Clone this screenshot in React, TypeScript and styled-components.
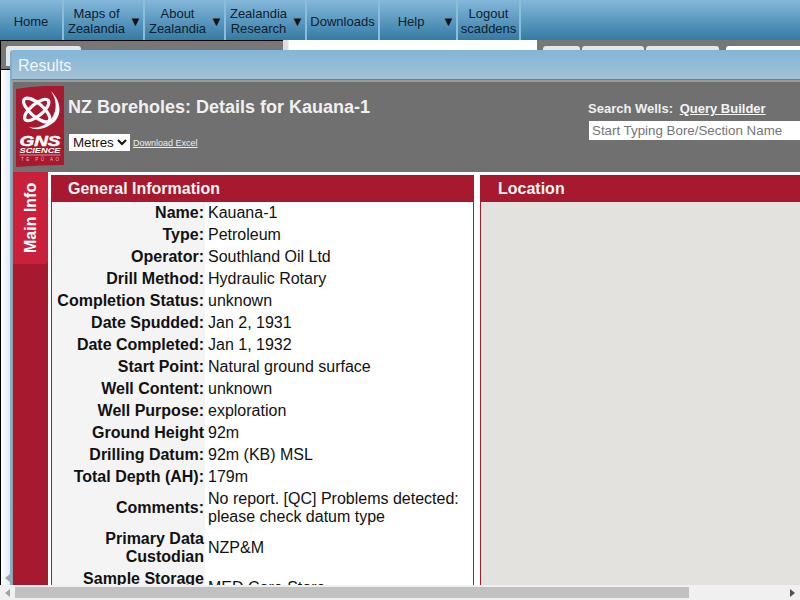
import React from 'react'
import styled, { createGlobalStyle } from 'styled-components'

const GlobalStyle = createGlobalStyle`
    html, body {
        margin: 0;
        padding: 0;
        width: 800px;
        height: 600px;
        overflow: hidden;
        background: #fff;
        font-family: "Liberation Sans", Arial, sans-serif;
    }
`

type NavEntry = { label: string[]; caret?: boolean; width: number }

const navEntries: NavEntry[] = [
    { label: ['Home'], width: 64 },
    { label: ['Maps of', 'Zealandia'], caret: true, width: 81 },
    { label: ['About', 'Zealandia'], caret: true, width: 81 },
    { label: ['Zealandia', 'Research'], caret: true, width: 81 },
    { label: ['Downloads'], width: 73 },
    { label: ['Help'], caret: true, width: 78 },
    { label: ['Logout', 'scaddens'], width: 63 },
]

const details: [string, string[]][] = [
    ['Name:', ['Kauana-1']],
    ['Type:', ['Petroleum']],
    ['Operator:', ['Southland Oil Ltd']],
    ['Drill Method:', ['Hydraulic Rotary']],
    ['Completion Status:', ['unknown']],
    ['Date Spudded:', ['Jan 2, 1931']],
    ['Date Completed:', ['Jan 1, 1932']],
    ['Start Point:', ['Natural ground surface']],
    ['Well Content:', ['unknown']],
    ['Well Purpose:', ['exploration']],
    ['Ground Height', ['92m']],
    ['Drilling Datum:', ['92m (KB) MSL']],
    ['Total Depth (AH):', ['179m']],
    ['Comments:', ['No report. [QC] Problems detected:', 'please check datum type']],
    ['Primary Data Custodian', ['NZP&M']],
    ['Sample Storage Location', ['MED Core Store']],
]

function GnsLogo() {
    return (
        <LogoSvg viewBox='0 0 48 81'>
            <path d='M0 3 Q24 -1 48 0 V79 Q24 79 0 81 Z' fill='#a6192e' />
            <path d='M35 5 C47 17 46 33 34 39 C28 43 20 45 13 41 C21 43 28 40 33 35 C41 28 42 16 35 5 Z' fill='#fff' />
            <g fill='none' stroke='#fff' strokeWidth='3.2'>
                <ellipse cx='20.7' cy='24' rx='16.5' ry='6.5' transform='rotate(41 20.7 24)' />
                <ellipse cx='20.7' cy='24' rx='15' ry='6' transform='rotate(-40 20.7 24)' />
            </g>
            <LogoWord x='24' y='59.5' fontSize='15' stroke='#fff' strokeWidth='0.5' textLength='41' lengthAdjust='spacingAndGlyphs'>GNS</LogoWord>
            <LogoWord x='24' y='67' fontSize='7' textLength='41' lengthAdjust='spacingAndGlyphs'>SCIENCE</LogoWord>
            <rect x='3.5' y='68.5' width='41' height='1' fill='#d98e9b' />
            <LogoSmall x='24' y='74.5' fontSize='4.6' textLength='38'>TE PŪ AO</LogoSmall>
        </LogoSvg>
    )
}

function App() {
    return (
        <Page>
            <GlobalStyle />
            <NavBar>
                {navEntries.map((entry) => (
                    <NavItem key={entry.label[0]} $width={entry.width}>
                        <NavLabel>
                            {entry.label.map((line) => (
                                <span key={line}>{line}</span>
                            ))}
                        </NavLabel>
                        {entry.caret && <NavCaret>▼</NavCaret>}
                    </NavItem>
                ))}
            </NavBar>

            <Backdrop>
                <BackLeft>
                    <BackTabStrip>
                        <BackTab $width={75} $left={5} />
                    </BackTabStrip>
                </BackLeft>
                <BackScroll />
                <BackPage />
                <BackRight>
                    <BackTab $width={37} $left={6} />
                    <BackTab $width={62} $left={2} />
                    <BackTab $width={73} $left={2} />
                    <BackTab $width={80} $left={7} $active />
                </BackRight>
            </Backdrop>

            <SideArrow />

            <Dialog>
                <DialogTitle>Results</DialogTitle>
                <DialogBody>
                    <Header>
                        <GnsLogo />
                        <HeaderMain>
                            <Heading>NZ Boreholes: Details for Kauana-1</Heading>
                            <UnitRow>
                                <UnitSelect defaultValue='Metres'>
                                    <option>Metres</option>
                                    <option>Feet</option>
                                </UnitSelect>
                                <ExcelLink href='#'>Download Excel</ExcelLink>
                            </UnitRow>
                        </HeaderMain>
                        <SearchBlock>
                            <SearchLabel>
                                Search Wells: <QueryLink href='#'>Query Builder</QueryLink>
                            </SearchLabel>
                            <SearchInput placeholder='Start Typing Bore/Section Name' />
                        </SearchBlock>
                    </Header>
                    <Content>
                        <SideTabs>
                            <SideTab>Main Info</SideTab>
                        </SideTabs>
                        <Panels>
                            <InfoPanel>
                                <PanelHeader>General Information</PanelHeader>
                                <DetailTable>
                                    <tbody>
                                        {details.map(([label, lines]) => (
                                            <tr key={label}>
                                                <DetailLabel>{label}</DetailLabel>
                                                <DetailValue>
                                                    {lines.map((line) => (
                                                        <div key={line}>{line}</div>
                                                    ))}
                                                </DetailValue>
                                            </tr>
                                        ))}
                                    </tbody>
                                </DetailTable>
                            </InfoPanel>
                            <LocationPanel>
                                <LocationHeader>Location</LocationHeader>
                                <MapArea />
                            </LocationPanel>
                        </Panels>
                    </Content>
                </DialogBody>
            </Dialog>

            <BottomScroll>
                <ArrowLeft />
                <ScrollTrack>
                    <ScrollThumb />
                </ScrollTrack>
                <ArrowRight />
            </BottomScroll>
        </Page>
    )
}

export default App

const Page = styled.div`
    position: relative;
    width: 800px;
    height: 600px;
    overflow: hidden;
    display: flex;
    flex-direction: column;
    background: #fff;
`

const NavBar = styled.nav`
    display: flex;
    height: 40px;
    flex: none;
    background: linear-gradient(to bottom, #85b8da, #337ba5);
`

const NavItem = styled.div<{ $width: number }>`
    width: ${(p) => p.$width}px;
    flex: none;
    box-sizing: border-box;
    display: flex;
    align-items: center;
    padding-top: 2px;
    border-right: 2px solid #8dbcd9;
    color: #10202c;
    font-size: 13px;
    line-height: 15px;
`

const NavLabel = styled.div`
    flex: 1;
    display: flex;
    flex-direction: column;
    align-items: center;
`

const NavCaret = styled.span`
    flex: none;
    width: 14px;
    font-size: 13px;
    color: #111;
`

const Backdrop = styled.div`
    flex: 1;
    min-height: 0;
    display: flex;
    align-items: flex-start;
`

const BackLeft = styled.div`
    width: 283px;
    height: 100%;
    flex: none;
    box-sizing: border-box;
    border-top: 1px solid #000;
    border-left: 1px solid #000;
    background: linear-gradient(to right, #fff, #dfeaf3 10px);
`

const BackTabStrip = styled.div`
    display: flex;
    align-items: flex-start;
    padding-top: 5px;
    height: 23px;
    background: #777;
    border-bottom: 1px solid #000;
`

const BackScroll = styled.div`
    width: 6px;
    height: 10px;
    flex: none;
    background: linear-gradient(to right, #ddd 0 70%, #f4f4f4);
`

const BackPage = styled.div`
    width: 248px;
    height: 10px;
    flex: none;
    background: #fff;
`

const BackRight = styled.div`
    flex: 1;
    height: 10px;
    box-sizing: border-box;
    background: #777;
    display: flex;
    align-items: flex-start;
    padding-top: 6px;
`

const BackTab = styled.div<{ $width: number; $left: number; $active?: boolean }>`
    width: ${(p) => p.$width}px;
    margin-left: ${(p) => p.$left}px;
    flex: none;
    height: 20px;
    border-radius: 3px 3px 0 0;
    background: ${(p) => (p.$active ? '#fff' : '#e6e6e6')};
`

const SideArrow = styled.div`
    position: absolute;
    left: 5px;
    top: 574px;
    width: 0;
    height: 0;
    border-top: 4px solid transparent;
    border-bottom: 4px solid transparent;
    border-right: 5px solid #a3a3a3;
`

const Dialog = styled.section`
    position: absolute;
    left: 10px;
    top: 50px;
    width: 800px;
    height: 535px;
    display: flex;
    flex-direction: column;
    border-left: 2px solid #7fb0d2;
    border-top-left-radius: 3px;
    background: #fff;
    overflow: hidden;
`

const DialogTitle = styled.div`
    height: 30px;
    flex: none;
    box-sizing: border-box;
    padding: 6px 0 0 6px;
    background: linear-gradient(to bottom, #82b5d7, #a3c2d6);
    border-bottom: 1px solid #4f86b5;
    color: #f2f6fa;
    font-size: 16px;
    line-height: 20px;
`

const DialogBody = styled.div`
    flex: 1;
    display: flex;
    flex-direction: column;
    min-height: 0;
    border-top: 2px solid #9a9a9a;
    border-left: 1px solid #9a9a9a;
`

const Header = styled.header`
    height: 90px;
    flex: none;
    display: flex;
    box-sizing: border-box;
    padding: 4px 0 0 3px;
    background: #707070;
`

const LogoSvg = styled.svg`
    width: 48px;
    height: 81px;
    flex: none;
`

const LogoWord = styled.text`
    font-family: "Liberation Sans", Arial, sans-serif;
    font-weight: 700;
    font-style: italic;
    fill: #fff;
    text-anchor: middle;
`

const LogoSmall = styled.text`
    font-family: "Liberation Sans", Arial, sans-serif;
    fill: #e8b8c0;
    text-anchor: middle;
`

const HeaderMain = styled.div`
    flex: none;
    width: 520px;
    padding: 9px 0 0 4px;
`

const Heading = styled.h1`
    margin: 0;
    color: #f0f0f0;
    font-size: 18px;
    line-height: 24px;
    font-weight: 700;
`

const UnitRow = styled.div`
    display: flex;
    align-items: flex-end;
    gap: 3px;
    margin-top: 15px;
    margin-left: 1px;
`

const UnitSelect = styled.select`
    height: 17px;
    width: 61px;
    border: none;
    border-radius: 0;
    background-color: #fff;
    color: #111;
    font-family: "Liberation Sans", Arial, sans-serif;
    font-size: 13.33px;
    padding: 0;
`

const ExcelLink = styled.a`
    color: #eee;
    font-size: 9px;
    line-height: 11px;
    margin-bottom: 2px;
`

const SearchBlock = styled.div`
    flex: none;
    padding-top: 15px;
`

const SearchLabel = styled.div`
    color: #f0f0f0;
    font-size: 13px;
    font-weight: 700;
    line-height: 16px;
    white-space: pre;
`

const QueryLink = styled.a`
    color: #f4f4f4;
    margin-left: 3px;
`

const SearchInput = styled.input`
    display: block;
    box-sizing: border-box;
    width: 240px;
    height: 19px;
    margin: 4px 0 0 1px;
    padding: 0 3px;
    border: none;
    outline: none;
    background: #fff;
    font-family: "Liberation Sans", Arial, sans-serif;
    font-size: 13.33px;

    &::placeholder {
        color: #757575;
    }
`

const Content = styled.div`
    flex: 1;
    min-height: 0;
    display: flex;
    padding-top: 3px;
    background: #fff;
`

const SideTabs = styled.div`
    width: 35px;
    flex: none;
    background: #a6192e;
    margin-top: -3px;
    margin-right: 3px;
`

const SideTab = styled.div`
    width: 35px;
    height: 92px;
    display: flex;
    align-items: center;
    justify-content: center;
    background: #c9203c;
    border-radius: 3px 0 0 0;
    color: #fff;
    font-size: 16px;
    font-weight: 700;
    writing-mode: vertical-rl;
    transform: rotate(180deg);
`

const Panels = styled.div`
    flex: 1;
    min-height: 0;
    display: flex;
    gap: 6px;
`

const InfoPanel = styled.div`
    width: 423px;
    flex: none;
    box-sizing: border-box;
    border: solid #a6192e;
    border-width: 0 1px;
    background: #fff;
    overflow: hidden;
`

const PanelHeader = styled.div`
    height: 27px;
    box-sizing: border-box;
    margin: 0 -1px;
    padding-left: 17px;
    background: #a6192e;
    color: #f4f4f4;
    font-size: 16px;
    font-weight: 700;
    line-height: 28px;
`

const LocationPanel = styled.div`
    flex: 1;
    display: flex;
    flex-direction: column;
    border-left: 1px solid #a6192e;
    min-height: 0;
`

const LocationHeader = styled(PanelHeader)`
    flex: none;
    margin: 0 0 0 -1px;
    padding-left: 18px;
`

const MapArea = styled.div`
    flex: 1;
    background: #e3e2de;
`

const DetailTable = styled.table`
    border-collapse: collapse;
    width: 100%;
    font-size: 16px;
    line-height: 18px;
    color: #111;
`

const DetailLabel = styled.th`
    width: 152px;
    padding: 2px 1px 2px 0;
    background: #f4f4f4;
    font-weight: 700;
    text-align: right;
    color: #111;
`

const DetailValue = styled.td`
    padding: 2px 3px;
`

const BottomScroll = styled.div`
    position: absolute;
    left: 0;
    right: 0;
    bottom: 0;
    height: 15px;
    display: flex;
    align-items: center;
    background: #f0f0f0;
`

const ArrowLeft = styled.div`
    width: 0;
    height: 0;
    margin: 0 5px;
    border-top: 4px solid transparent;
    border-bottom: 4px solid transparent;
    border-right: 5px solid #a3a3a3;
`

const ArrowRight = styled.div`
    width: 0;
    height: 0;
    margin: 0 5px;
    border-top: 4px solid transparent;
    border-bottom: 4px solid transparent;
    border-left: 5px solid #505050;
`

const ScrollTrack = styled.div`
    flex: 1;
    height: 11px;
`

const ScrollThumb = styled.div`
    width: 674px;
    height: 100%;
    background: #c1c1c1;
`
